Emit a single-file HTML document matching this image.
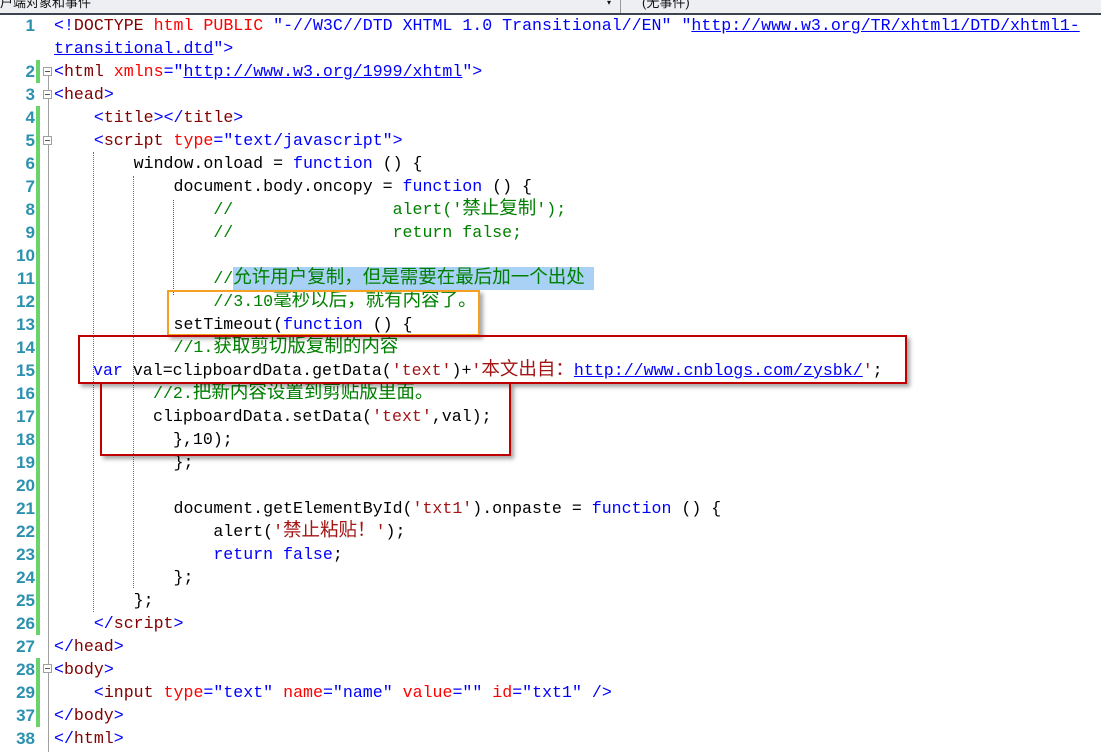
<!DOCTYPE html>
<html><head><meta charset="utf-8"><style>
html,body{margin:0;padding:0;background:#fff;width:1101px;height:754px;overflow:hidden;position:relative}
.top{position:absolute;left:0;top:0;width:1101px;height:13px;background:#eeeff3;border-bottom:2px solid #3c4450;font:13px "Liberation Sans","Noto Sans CJK SC",sans-serif;line-height:6px;color:#111;overflow:hidden}
.r{position:absolute;left:54px;height:23px;line-height:23px;white-space:pre;font-family:"Liberation Mono","Noto Sans CJK SC",monospace;font-size:16.6px;color:#000}
.n{position:absolute;left:0;width:35px;text-align:right;height:23px;line-height:23px;font-family:"Liberation Sans",sans-serif;font-weight:bold;font-size:17px;color:#2b91af}
.c{font-family:"Noto Sans CJK SC",sans-serif;font-size:18.5px;line-height:1}
.t{color:#0000ff}.e{color:#800000}.a{color:#ff0000}.v{color:#0000ff}.k{color:#0000ff}.s{color:#a31515}.g{color:#008000}
.u{color:#0000ff;text-decoration:underline}
.gb{position:absolute;left:36px;width:4px;background:#6bd36b}
.fold{position:absolute;left:48px;width:1px;background:#a0a0a0}
.fb{position:absolute;left:43px;width:9px;height:9px;border:1px solid #a0a0a0;background:#fff;box-sizing:border-box}
.fb:after{content:"";position:absolute;left:1px;top:3px;width:5px;height:1px;background:#555}
.gd{position:absolute;width:0;border-left:1px dotted}
.box{position:absolute;box-sizing:border-box;box-shadow:3px 3px 4px rgba(0,0,0,.35)}
</style></head><body>
<div class="top"><span style="position:absolute;left:0;top:0">户端对象和事件</span><span style="position:absolute;left:607px;top:0;font-size:8px">▾</span><span style="position:absolute;left:620px;top:0;width:1px;height:13px;background:#999"></span><span style="position:absolute;left:642px;top:0">(无事件)</span></div>

<div class="gb" style="top:60px;height:23px"></div>
<div class="gb" style="top:106px;height:529px"></div>
<div class="gb" style="top:658px;height:69px"></div>
<div class="fold" style="top:72px;height:680px"></div>
<div class="fb" style="top:67px"></div>
<div class="fb" style="top:90px"></div>
<div class="fb" style="top:136px"></div>
<div class="fb" style="top:664px"></div>

<div class="gd" style="left:93px;top:152px;height:460px;border-color:#2b8a8a"></div>
<div class="gd" style="left:133px;top:176px;height:412px;border-color:#2b8a8a"></div>
<div class="gd" style="left:173px;top:200px;height:95px;border-color:#e02020"></div>

<div style="position:absolute;left:233px;top:267px;width:361px;height:23px;background:#a8d1f5"></div>

<div class="n" style="top:14px">1</div>
<div class="r" style="top:14px"><span class="t">&lt;!</span><span class="e">DOCTYPE</span> <span class="a">html</span> <span class="a">PUBLIC</span> <span class="v">"-//W3C//DTD XHTML 1.0 Transitional//EN"</span> <span class="v">"</span><span class="u">http://www.w3.org/TR/xhtml1/DTD/xhtml1-</span></div>
<div class="r" style="top:37px"><span class="u">transitional.dtd</span><span class="v">"</span><span class="t">&gt;</span></div>
<div class="n" style="top:60px">2</div>
<div class="r" style="top:60px"><span class="t">&lt;</span><span class="e">html</span> <span class="a">xmlns</span><span class="t">="</span><span class="u">http://www.w3.org/1999/xhtml</span><span class="t">"&gt;</span></div>
<div class="n" style="top:83px">3</div>
<div class="r" style="top:83px"><span class="t">&lt;</span><span class="e">head</span><span class="t">&gt;</span></div>
<div class="n" style="top:106px">4</div>
<div class="r" style="top:106px">    <span class="t">&lt;</span><span class="e">title</span><span class="t">&gt;&lt;/</span><span class="e">title</span><span class="t">&gt;</span></div>
<div class="n" style="top:129px">5</div>
<div class="r" style="top:129px">    <span class="t">&lt;</span><span class="e">script</span> <span class="a">type</span><span class="t">="text/javascript"&gt;</span></div>
<div class="n" style="top:152px">6</div>
<div class="r" style="top:152px">        window.onload = <span class="k">function</span> () {</div>
<div class="n" style="top:175px">7</div>
<div class="r" style="top:175px">            document.body.oncopy = <span class="k">function</span> () {</div>
<div class="n" style="top:198px">8</div>
<div class="r" style="top:198px">                <span class="g">//                alert('<span class="c">禁止复制</span>');</span></div>
<div class="n" style="top:221px">9</div>
<div class="r" style="top:221px">                <span class="g">//                return false;</span></div>
<div class="n" style="top:244px">10</div>
<div class="n" style="top:267px">11</div>
<div class="r" style="top:267px">                <span class="g">//<span class="c">允许用户复制，但是需要在最后加一个出处</span></span></div>
<div class="n" style="top:290px">12</div>
<div class="r" style="top:290px">                <span class="g">//3.10<span class="c">毫秒以后，就有内容了。</span></span></div>
<div class="n" style="top:313px">13</div>
<div class="r" style="top:313px">            setTimeout(<span class="k">function</span> () {</div>
<div class="n" style="top:336px">14</div>
<div class="r" style="top:336px">            <span class="g">//1.<span class="c">获取剪切版复制的内容</span></span></div>
<div class="n" style="top:359px">15</div>
<div class="r" style="top:359px;left:93px"><span class="k">var</span> val=clipboardData.getData(<span class="s">'text'</span>)+<span class="s">'<span class="c">本文出自：</span></span><span class="u">http://www.cnblogs.com/zysbk/</span><span class="s">'</span>;</div>
<div class="n" style="top:382px">16</div>
<div class="r" style="top:382px;left:153px"><span class="g">//2.<span class="c">把新内容设置到剪贴版里面。</span></span></div>
<div class="n" style="top:405px">17</div>
<div class="r" style="top:405px;left:153px">clipboardData.setData(<span class="s">'text'</span>,val);</div>
<div class="n" style="top:428px">18</div>
<div class="r" style="top:428px;left:173px">},10);</div>
<div class="n" style="top:451px">19</div>
<div class="r" style="top:451px">            };</div>
<div class="n" style="top:474px">20</div>
<div class="n" style="top:497px">21</div>
<div class="r" style="top:497px">            document.getElementById(<span class="s">'txt1'</span>).onpaste = <span class="k">function</span> () {</div>
<div class="n" style="top:520px">22</div>
<div class="r" style="top:520px">                alert(<span class="s">'<span class="c">禁止粘贴！</span>'</span>);</div>
<div class="n" style="top:543px">23</div>
<div class="r" style="top:543px">                <span class="k">return</span> <span class="k">false</span>;</div>
<div class="n" style="top:566px">24</div>
<div class="r" style="top:566px">            };</div>
<div class="n" style="top:589px">25</div>
<div class="r" style="top:589px">        };</div>
<div class="n" style="top:612px">26</div>
<div class="r" style="top:612px">    <span class="t">&lt;/</span><span class="e">script</span><span class="t">&gt;</span></div>
<div class="n" style="top:635px">27</div>
<div class="r" style="top:635px"><span class="t">&lt;/</span><span class="e">head</span><span class="t">&gt;</span></div>
<div class="n" style="top:658px">28</div>
<div class="r" style="top:658px"><span class="t">&lt;</span><span class="e">body</span><span class="t">&gt;</span></div>
<div class="n" style="top:681px">29</div>
<div class="r" style="top:681px">    <span class="t">&lt;</span><span class="e">input</span> <span class="a">type</span><span class="t">="text"</span> <span class="a">name</span><span class="t">="name"</span> <span class="a">value</span><span class="t">=""</span> <span class="a">id</span><span class="t">="txt1"</span> <span class="t">/&gt;</span></div>
<div class="n" style="top:704px">37</div>
<div class="r" style="top:704px"><span class="t">&lt;/</span><span class="e">body</span><span class="t">&gt;</span></div>
<div class="n" style="top:727px">38</div>
<div class="r" style="top:727px"><span class="t">&lt;/</span><span class="e">html</span><span class="t">&gt;</span></div>

<div class="box" style="left:167px;top:290px;width:313px;height:46px;border:2px solid #f5a020"></div>
<div class="box" style="left:78px;top:335px;width:829px;height:49px;border:2px solid #c00000"></div>
<div class="box" style="left:100px;top:383px;width:411px;height:73px;border:2px solid #c00000;border-top:none"></div>
</body></html>
